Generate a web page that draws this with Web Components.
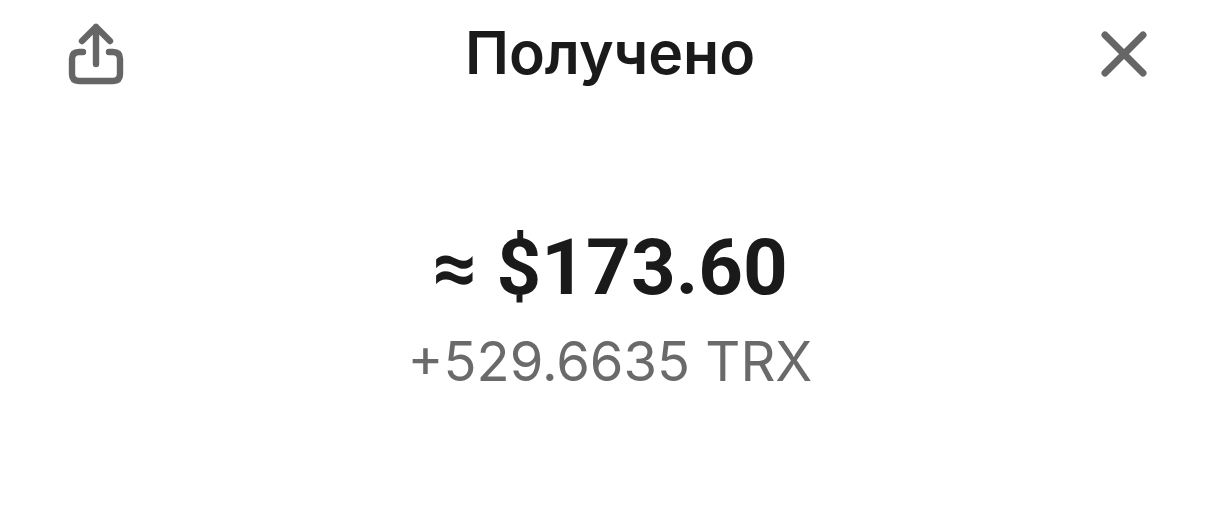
<!DOCTYPE html>
<html lang="ru">
<head>
<meta charset="utf-8">
<title>Получено</title>
<style>
  html, body { margin: 0; background: #fff; }
  body { font-family: Roboto, "Liberation Sans", sans-serif; }
</style>
</head>
<body>
<tx-details>
  <tx-header slot="header" title-text="Получено"></tx-header>
  <tx-amount fiat="≈ $173.60" crypto="+529.6635 TRX"></tx-amount>
</tx-details>

<script>
class TxDetails extends HTMLElement {
    constructor() {
        super();
        this.shadowDOM = this.attachShadow({mode: "open"});
        this.shadowDOM.innerHTML = `
        <style>
        :host {
            display: flex;
            flex-direction: column;
            height: 507px;
            overflow: hidden;
            background: #fff;
        }
        </style>
        <slot name="header"></slot>
        <slot></slot>`;
    }
}

class TxHeader extends HTMLElement {
    constructor() {
        super();
        this.shadowDOM = this.attachShadow({mode: "open"});
    }

    connectedCallback() {
        this.shadowDOM.innerHTML = `
        <style>
        :host {
            display: flex;
            align-items: center;
            justify-content: space-between;
            padding: 19px 64px 0;
        }
        svg {
            display: block;
            width: 64px;
            height: 64px;
            fill: none;
            stroke: #666;
            stroke-width: 6.4;
            stroke-linecap: round;
            stroke-linejoin: round;
        }
        h1 {
            margin: 0;
            font-family: Inter, Roboto, sans-serif;
            font-size: 59px;
            line-height: 68px;
            font-weight: 600;
            color: #1a1a1a;
        }
        </style>
        <svg viewBox="0 0 64 64" aria-label="share">
            <path d="M32 6V43M18 20L32 6L46 20"/>
            <path d="M19 31H15Q8 31 8 38V53Q8 60 15 60H49Q56 60 56 53V38Q56 31 49 31H45"/>
        </svg>
        <h1>${this.getAttribute("title-text")}</h1>
        <svg viewBox="0 0 64 64" aria-label="close" style="stroke-width:7">
            <path d="M13 14L51 52M51 14L13 52"/>
        </svg>`;
    }
}

class TxAmount extends HTMLElement {
    constructor() {
        super();
        this.shadowDOM = this.attachShadow({mode: "open"});
    }

    connectedCallback() {
        this.shadowDOM.innerHTML = `
        <style>
        :host {
            display: flex;
            flex-direction: column;
            align-items: center;
            padding-top: 135px;
        }
        .fiat {
            font-size: 78px;
            line-height: 92px;
            font-weight: 700;
            color: #1a1a1a;
        }
        .crypto {
            margin-top: 15px;
            font-family: Inter, Roboto, sans-serif;
            font-size: 54.3px;
            line-height: 64px;
            color: #6a6a6a;
        }
        </style>
        <div class="fiat">${this.getAttribute("fiat")}</div>
        <div class="crypto">${this.getAttribute("crypto")}</div>`;
    }
}

customElements.define("tx-details", TxDetails);
customElements.define("tx-header", TxHeader);
customElements.define("tx-amount", TxAmount);
</script>
</body>
</html>
